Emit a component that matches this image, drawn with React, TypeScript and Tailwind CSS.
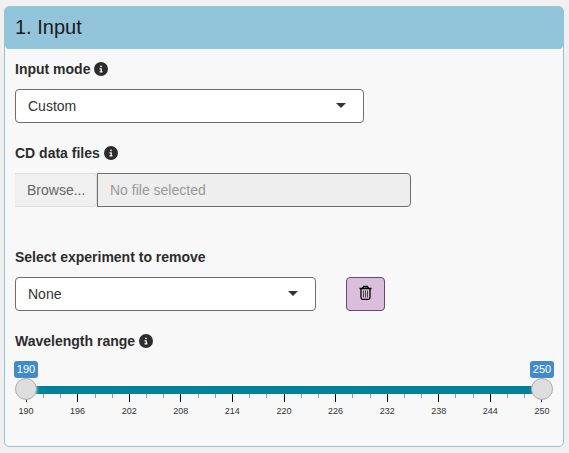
import React from "react";
import { FaCircleInfo } from "react-icons/fa6";

const wavelengths = [190, 196, 202, 208, 214, 220, 226, 232, 238, 244, 250];
const ticks = Array.from({ length: 31 }, (_, i) => i);

function Label({ children, info = true }: { children: string; info?: boolean }) {
  return (
    <div className="flex h-5 items-center gap-1 text-[14px] leading-5 font-bold text-[#2c2c2c]">
      <span>{children}</span>
      {info && <FaCircleInfo className="size-[14px]" />}
    </div>
  );
}

function Select({ value, className }: { value: string; className: string }) {
  return (
    <div className={`flex h-[34px] items-center justify-between rounded-[4px] border border-[#6e6e6e] bg-white pr-[17px] pl-3 text-[14px] text-[#333] ${className}`}>
      <span>{value}</span>
      <span className="mb-[2px] h-0 w-0 border-x-[5px] border-t-[5px] border-x-transparent border-t-[#333]" />
    </div>
  );
}

function Handle({ value, className }: { value: number; className: string }) {
  return (
    <div className={`absolute top-0 flex w-6 flex-col items-center ${className}`}>
      <span className="flex h-[17px] w-6 items-center justify-center rounded-[3px] bg-[#428bca] text-[11px] leading-none text-white">{value}</span>
      <span className="size-[22px] shrink-0 rounded-full border border-[#ababab] bg-[#dedede] shadow-[1px_1px_3px_rgba(255,255,255,0.3)]" />
    </div>
  );
}

function RangeSlider() {
  return (
    <div className="relative mt-[10px] h-[57px] pt-[25px]">
      <div className="ml-[11px] h-2 w-[516px] bg-[#00829b]" />
      <div className="ml-[10.8px] flex h-2 w-[516.8px] justify-between">
        {ticks.map((t) => (
          <span key={t} className={t % 3 === 0 ? "h-2 w-px bg-black" : "h-1 w-px bg-[#999]"} />
        ))}
      </div>
      <div className="mt-1 ml-[11px] flex w-[516px] justify-between">
        {wavelengths.map((w) => (
          <span key={w} className="flex w-0 justify-center text-[9px] leading-[10px] text-[#333]">
            <span>{w}</span>
          </span>
        ))}
      </div>
      <Handle value={190} className="-left-px" />
      <Handle value={250} className="left-[515px]" />
    </div>
  );
}

export default function App() {
  return (
    <div className="h-[453px] w-[569px] bg-[#f0f0f0] pt-[6px] pl-1 font-['Liberation_Sans',Arial,sans-serif]">
      <section className="h-[441px] w-[560px] rounded-[5px] border border-[#93c5da] bg-[#f8f8f8]">
        <header className="flex h-[42px] items-center rounded-[4px] bg-[#93c5da] pb-[2px] pl-[10px] text-[20px] text-[#1a1a1a]">
          <h3 className="leading-[22px]">1. Input</h3>
        </header>
        <div className="px-[10px] pt-[10px]">
          <Label>Input mode</Label>
          <Select value="Custom" className="mt-[10px] w-[349px]" />
          <div className="mt-5">
            <Label>CD data files</Label>
          </div>
          <div className="mt-[10px] flex h-[34px] w-[396px] text-[14px]">
            <div className="flex w-[82px] items-center rounded-r-[4px] border-y border-r border-[#dcdcdc] bg-[#f0f0f0] pl-3 text-[#666]">Browse...</div>
            <div className="flex flex-1 items-center rounded-r-[4px] border border-[#6e6e6e] bg-[#eee] pl-3 text-[#999]">No file selected</div>
          </div>
          <div className="mt-10">
            <Label info={false}>Select experiment to remove</Label>
          </div>
          <div className="mt-[10px] flex gap-[30px]">
            <Select value="None" className="w-[301px]" />
            <button aria-label="Remove" className="flex h-[34px] w-[39px] items-center justify-center rounded-[4px] border border-[#674872] bg-[#dabfdd]">
              <svg viewBox="0 0 13 16" className="-mt-[2px] h-4 w-[13px]" fill="none" stroke="#000">
                <path d="M0.5 3.5H12.5M3.5 3.2L4.7 1.5H8.3L9.5 3.2M2 3.5V12.5C2 13.6 2.5 14.3 3.6 14.3H9.4C10.5 14.3 11 13.6 11 12.5V3.5" strokeWidth="1.3" />
                <path d="M4.5 5.5V12.5M6.5 5.5V12.5M8.5 5.5V12.5" stroke="#33303a" strokeWidth="0.9" />
              </svg>
            </button>
          </div>
          <div className="mt-5">
            <Label>Wavelength range</Label>
          </div>
          <RangeSlider />
        </div>
      </section>
    </div>
  );
}
